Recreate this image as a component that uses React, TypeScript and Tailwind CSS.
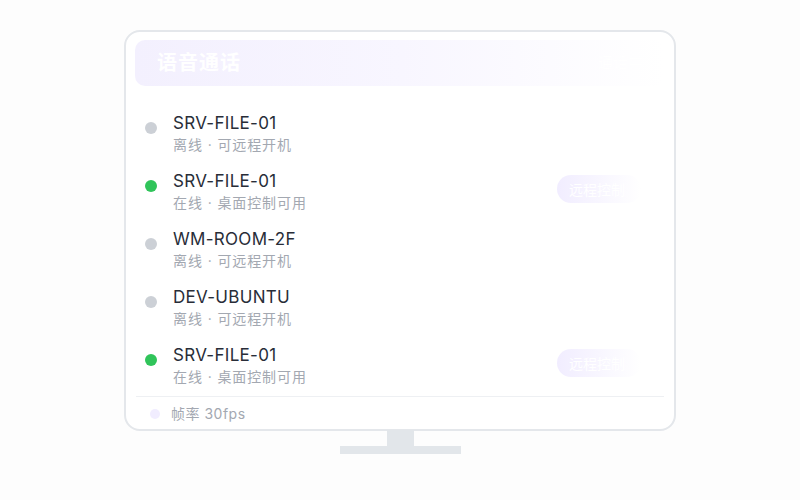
import React from "react";

type Device = {
  name: string;
  online: boolean;
};

const devices: Device[] = [
  { name: "SRV-FILE-01", online: false },
  { name: "SRV-FILE-01", online: true },
  { name: "WM-ROOM-2F", online: false },
  { name: "DEV-UBUNTU", online: false },
  { name: "SRV-FILE-01", online: true },
];

export default function App() {
  return (
    <div
      className="w-[800px] h-[500px] bg-[#fdfdfd] flex flex-col items-center pt-[30px]"
      style={{ fontFamily: 'Inter, "Noto Sans CJK SC", sans-serif' }}
    >
      {/* Screen */}
      <div className="w-[552px] h-[401px] bg-white border-2 border-[#e4e7eb] rounded-[16px] flex flex-col px-[9px] pt-2">
        {/* Header */}
        <div className="h-[46px] shrink-0 rounded-[10px] bg-gradient-to-r from-[#f3f0fe] via-[#f8f6ff] to-white flex items-center justify-between px-[22px]">
          <span className="text-[20px] font-bold text-white tracking-[1px]">语音通话</span>
          <span className="text-[15px] text-white">通话中</span>
        </div>

        {/* Device list */}
        <div className="flex flex-col pt-4">
          {devices.map((d, i) => (
            <div key={i} className="h-[58px] flex items-start pt-[9px] pl-[10px] pr-[24px]">
              <span
                className={
                  d.online
                    ? "w-3 h-3 rounded-full bg-[#30c45a] shrink-0 mt-[11px]"
                    : "w-3 h-3 rounded-full bg-[#ccd0d6] shrink-0 mt-[11px]"
                }
              />
              <div className="flex flex-col ml-4 flex-1">
                <span className="text-[17px] leading-[24px] tracking-[0.3px] text-[#282d38]">{d.name}</span>
                <span className="text-[14px] leading-[20px] tracking-[0.9px] text-[#a3a8b1]">
                  {d.online ? "在线 · 桌面控制可用" : "离线 · 可远程开机"}
                </span>
              </div>
              {d.online && (
                <span className="self-center -mt-[9px] h-[28px] w-[84px] rounded-full bg-gradient-to-r from-[#f1edff] to-white flex items-center pl-3 text-[14px] text-white">
                  远程控制
                </span>
              )}
            </div>
          ))}
        </div>

        {/* Footer */}
        <div className="mx-[1px] mt-[4px] border-t border-[#eef0f3] flex items-center pt-[7px] pl-[14px]">
          <span className="w-[10px] h-[10px] rounded-full bg-[#f1edff]" />
          <span className="ml-[11px] text-[14px] leading-[20px] tracking-[0.5px] text-[#a3a8b1]">帧率 30fps</span>
        </div>
      </div>

      {/* Stand */}
      <div className="w-[27px] h-[16px] bg-[#e2e6ea] -mt-[1px]" />
      <div className="w-[121px] h-[8px] bg-[#e2e6ea]" />
    </div>
  );
}
